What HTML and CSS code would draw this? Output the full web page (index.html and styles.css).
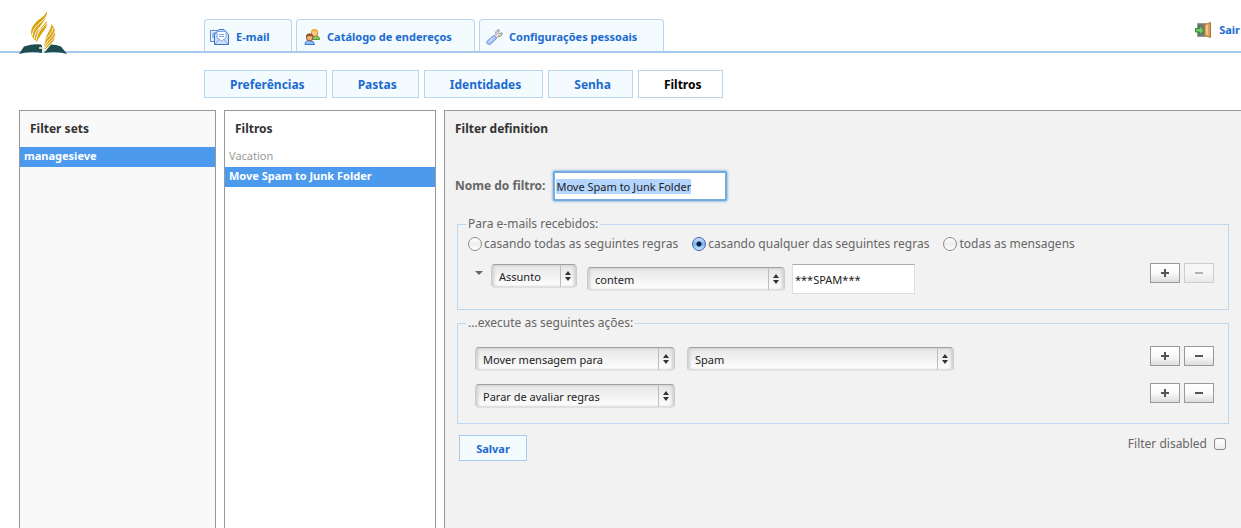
FILE: index.html
```html
<!DOCTYPE html>
<html lang="pt-BR">
<head>
  <meta charset="UTF-8">
  <meta name="viewport" content="width=device-width, initial-scale=1.0">
  <title>Filtros</title>
  <link rel="stylesheet" href="styles.css">
</head>
<body>
<header class="header">
  <svg class="logo" width="48" height="45" viewBox="0 0 48 45">
    <path fill="#1f4d4d" d="M0 43L5 35.500Q14 32.500 22 33.500L23.500 36V42Q12 39.500 0 43z"/>
    <path fill="#1f4d4d" d="M48 43L42 35.500Q37 33.500 32 33.500L25 42Q37 39.500 48 43z"/>
    <path fill="#d9a411" d="M28 0C29 11 17 13 18 31 10 25 10 18 18 10 23 6 26 5 28 0z"/>
    <path fill="#d9a411" d="M28 10C29 18 22 21 18 31 17 20 22 17 28 10z"/>
    <path fill="none" stroke="#fff" stroke-width=".9" d="M28 4C25 11 14 14 13 25M28 8C25 14 16 17 15 28M28 12C25 16 18 19 17 30"/>
    <path fill="#d9a411" d="M32 13C33 20 24 23 24.500 43 25 36 35 33 36 26 37 20 35 16 32 13z"/>
    <path fill="none" stroke="#fff" stroke-width=".9" d="M34 17C33 24 26 26 25 33M36 20C34 27 27 29 25 37M36 25C34 30 27 32 25 40"/>
    <path fill="none" stroke="#fff" stroke-width="1.500" d="M24 34v11M20 37h3"/>
  </svg>
  <nav class="taskbar">
    <a href="#" class="task mail">
      <svg width="20" height="16" viewBox="0 0 20 16">
        <path fill="#e8f1ff" stroke="#5b87d6" d="M.5 1.500h14v11H.5z"/>
        <path fill="none" stroke="#5b87d6" d="M3 4v5M3 4h3"/>
        <path fill="#cfe2fb" stroke="#3d6fc4" d="M4.500 5.500L9 .5h5l4.500 5v10h-14z"/>
        <path fill="#fff" stroke="#7ba4e2" d="M7 9V2.500h9V9l-4.500 3z"/>
        <path fill="none" stroke="#7ba4e2" d="M9 5.500h5M9 7.500h5M5 15l4.500-5M18 15l-4.500-5"/>
      </svg>
      E-mail
    </a>
    <a href="#" class="task contacts">
      <svg width="17" height="16" viewBox="0 0 17 16">
        <path fill="#86c95a" stroke="#58993a" d="M6.500 10.500q0-4 4.500-4t4.500 4z"/>
        <circle cx="10.500" cy="4" r="3.300" fill="#f9c992" stroke="#cf8627"/>
        <path fill="#f0b321" d="M7 4q-.5-4 3.500-4T14 4q-1-2-3.500-2T7 4z"/>
        <path fill="#8ec0f8" stroke="#3977cf" d="M1 15.500q0-4 4.500-4t5 4z"/>
        <circle cx="5.700" cy="8.500" r="3.300" fill="#efb185" stroke="#935024"/>
        <path fill="#95532b" d="M2 8.500q-.5-4 3.500-4t4 4Q8.500 7 5.700 7T2 8.500z"/>
      </svg>
      Catálogo de endereços
    </a>
    <a href="#" class="task settings">
      <svg width="17" height="16" viewBox="0 0 17 16">
        <path fill="#dedede" stroke="#8a8a8a" d="M8 7.500l2-2Q9 2 12.500.6l.9.600-1 2.300 1.300 1.300 2.200-1 .6.800Q15.500 8 12 7.500L10 9.500z"/>
        <path fill="#a9c6f5" stroke="#6f94d4" d="M7.500 6.500l3 3-5 5Q4 16 2 15.200.2 14.500.8 12.500z"/>
        <path fill="none" stroke="#d8e7ff" d="M7.500 8.500l-5 5"/>
      </svg>
      Configurações pessoais
    </a>
  </nav>
  <a href="#" class="logout">
    <svg width="17" height="16" viewBox="0 0 17 16">
      <path fill="#777" stroke="#999" d="M2.500 1.500h8v13h-8z"/>
      <path fill="#d9a35b" stroke="#a9753a" d="M9.500 2.500l6-2v15l-6-2z"/>
      <path fill="#edc68d" d="M11 3.500l2-1v11l-2-1z"/>
      <path fill="#77c46a" stroke="#2f8a35" d="M.5 6.500h4v-3l4.500 5-4.500 4.500v-3h-4z"/>
    </svg>
    Sair
  </a>
</header>

<nav class="sections">
  <a href="#" class="section">Preferências</a>
  <a href="#" class="section">Pastas</a>
  <a href="#" class="section">Identidades</a>
  <a href="#" class="section">Senha</a>
  <a href="#" class="section active">Filtros</a>
</nav>

<main class="panels">
  <section class="panel filter-sets">
    <h2>Filter sets</h2>
    <ul class="list">
      <li class="selected">managesieve</li>
    </ul>
  </section>

  <section class="panel filters">
    <h2>Filtros</h2>
    <ul class="list">
      <li class="disabled">Vacation</li>
      <li class="selected">Move Spam to Junk Folder</li>
    </ul>
  </section>

  <section class="panel definition">
    <h2>Filter definition</h2>
    <form class="filter-form">
      <div class="name-row">
        <label for="filterName">Nome do filtro:</label>
        <input type="text" id="filterName" class="name-input" value="Move Spam to Junk Folder">
      </div>

      <fieldset>
        <legend>Para e-mails recebidos:</legend>
        <div class="radios">
          <label><input type="radio" name="join">casando todas as seguintes regras</label>
          <label><input type="radio" name="join" checked>casando qualquer das seguintes regras</label>
          <label><input type="radio" name="join">todas as mensagens</label>
        </div>
        <div class="row rule">
          <span class="caret"></span>
          <span class="select subject">
            <select aria-label="Assunto"><option>Assunto</option></select>
            <svg class="arrows" width="6" height="10" viewBox="0 0 6 10"><path d="M3 0l3 4H0zM3 10l3-4H0z"/></svg>
          </span>
          <span class="select operator">
            <select aria-label="contem"><option>contem</option></select>
            <svg class="arrows" width="6" height="10" viewBox="0 0 6 10"><path d="M3 0l3 4H0zM3 10l3-4H0z"/></svg>
          </span>
          <input type="text" class="value-input" aria-label="Valor" value="***SPAM***">
          <span class="buttons">
            <button type="button" class="small-btn plus" aria-label="+"></button>
            <button type="button" class="small-btn" aria-label="-" disabled></button>
          </span>
        </div>
      </fieldset>

      <fieldset class="actions">
        <legend>...execute as seguintes ações:</legend>
        <div class="row">
          <span class="select action">
            <select aria-label="Mover mensagem para"><option>Mover mensagem para</option></select>
            <svg class="arrows" width="6" height="10" viewBox="0 0 6 10"><path d="M3 0l3 4H0zM3 10l3-4H0z"/></svg>
          </span>
          <span class="select folder">
            <select aria-label="Spam"><option>Spam</option></select>
            <svg class="arrows" width="6" height="10" viewBox="0 0 6 10"><path d="M3 0l3 4H0zM3 10l3-4H0z"/></svg>
          </span>
          <span class="buttons">
            <button type="button" class="small-btn plus" aria-label="+"></button>
            <button type="button" class="small-btn" aria-label="-"></button>
          </span>
        </div>
        <div class="row">
          <span class="select action">
            <select aria-label="Parar de avaliar regras"><option>Parar de avaliar regras</option></select>
            <svg class="arrows" width="6" height="10" viewBox="0 0 6 10"><path d="M3 0l3 4H0zM3 10l3-4H0z"/></svg>
          </span>
          <span class="buttons">
            <button type="button" class="small-btn plus" aria-label="+"></button>
            <button type="button" class="small-btn" aria-label="-"></button>
          </span>
        </div>
      </fieldset>

      <div class="form-footer">
        <button type="submit" class="save-btn">Salvar</button>
        <label class="disable">Filter disabled <input type="checkbox"></label>
      </div>
    </form>
  </section>
</main>

<script>
  const filterName = document.getElementById("filterName");
  filterName.focus();
  filterName.select();
</script>
</body>
</html>
```
FILE: styles.css
```css
* {
  box-sizing: border-box;
}
body {
  margin: 0;
  min-height: 100vh;
  display: flex;
  flex-direction: column;
  background: #fff;
  color: #666;
  font-family: "Noto Sans", "Open Sans", sans-serif;
  font-size: 12px;
  line-height: 16px;
}
a {
  color: #1b6ad1;
  font-weight: bold;
  text-decoration: none;
}
input, select, button {
  font-family: inherit;
  font-size: 11px;
  color: #222;
}

/* header */
.header {
  display: flex;
  align-items: flex-end;
  height: 53px;
  padding-left: 19px;
  border-bottom: 2px solid #a6caec;
}
.logo {
  margin-bottom: -5px;
}
.taskbar {
  display: flex;
  gap: 4px;
  margin-left: 137px;
}
.task {
  display: flex;
  align-items: center;
  gap: 6px;
  height: 32px;
  padding: 3px 18px 0 5px;
  border: 1px solid #b7d5ef;
  border-bottom: none;
  border-radius: 4px 4px 0 0;
  background: #f4fbff;
  font-size: 11px;
}
.mail {
  min-width: 88px;
}
.contacts {
  min-width: 179px;
  padding-left: 7px;
}
.settings {
  min-width: 185px;
  padding-left: 6px;
}
.logout {
  display: flex;
  align-items: center;
  gap: 7px;
  margin-left: auto;
  padding: 0 1px 13px 0;
  font-size: 11px;
}

/* section tabs */
.sections {
  display: flex;
  gap: 5px;
  padding: 17px 0 12px 204px;
}
.section {
  height: 28px;
  padding: 0 21px 0 25px;
  border: 1px solid #b7d5ef;
  background: #f4fbff;
  line-height: 27px;
}
.section.active {
  background: #fff;
  color: #000;
}

/* panels */
.panels {
  flex: 1;
  display: flex;
  gap: 8px;
  padding-left: 19px;
}
.panel {
  border: 1px solid #999;
  border-bottom: none;
  background: #fff;
}
.panel h2 {
  margin: 0;
  padding: 10px;
  color: #333;
  font-size: 12px;
  line-height: 16px;
}
.filter-sets {
  width: 197px;
  background: #f9f9f9;
}
.filters {
  width: 212px;
}
.definition {
  flex: 1;
  border-right: none;
  background: #f2f2f2;
}
.list {
  margin: 0;
  padding: 0;
  list-style: none;
  font-size: 11px;
}
.list li {
  height: 20px;
  padding: 0 4px;
  line-height: 18px;
}
.list .selected {
  background: #4c9aed;
  color: #fff;
  font-weight: bold;
}
.list .disabled {
  color: #999;
}

/* filter form */
.filter-form {
  padding: 24px 12px 0;
}
.name-row {
  display: flex;
  align-items: center;
  gap: 8px;
  margin: 0 -2px 15px;
}
.name-row label {
  font-weight: bold;
}
.name-input {
  width: 174px;
  height: 30px;
  padding: 0 1px;
  border: 2px solid #77abdd;
  border-radius: 2px;
  outline: none;
  background: #fff;
  box-shadow: 0 0 2px 1px #9cc3ea;
}
.name-input::selection {
  background: #b4d5fe;
  color: #222;
}
fieldset {
  margin: 0;
  padding: 0 14px 15px 8px;
  border: 1px solid #bbd8f0;
}
fieldset + fieldset {
  margin-top: 5px;
}
legend {
  padding: 0 2px;
}
.radios {
  display: flex;
  flex-wrap: wrap;
  gap: 14px;
  padding: 4px 2px 0;
}
.radios label {
  display: flex;
  align-items: center;
  gap: 2px;
}
.radios input {
  appearance: none;
  width: 14px;
  height: 14px;
  margin: 0;
  border: 1px solid #8b8b8b;
  border-radius: 50%;
  background: linear-gradient(#fff, #eee 50%, #fff);
}
.radios input:checked {
  border-color: #44669c;
  background: radial-gradient(circle, #0b1d40 2px, transparent 3px), linear-gradient(#cfe3fa, #79b3f0 50%, #c4ecff);
}
.row {
  display: flex;
  align-items: flex-start;
  gap: 12px;
}
.rule {
  gap: 7px;
  padding: 12px 0 0 9px;
}
.caret {
  margin: 7px 1px 0 0;
  border: 4px solid transparent;
  border-top-color: #666;
  border-bottom: none;
}
.select {
  position: relative;
  height: 24px;
}
.select select {
  appearance: none;
  width: 100%;
  height: 24px;
  padding: 0 24px 0 7px;
  border: 1px solid #ccc;
  border-top-color: #a0a0a0;
  border-bottom-color: #dde1e6;
  border-radius: 4px;
  background: linear-gradient(#bbb, #bbb) right 15px top / 1px 100% no-repeat, linear-gradient(#e6e6e6, #fff);
  box-shadow: inset 2px 0 3px #d0d0d0, inset -2px 0 3px #d0d0d0;
}
.arrows {
  position: absolute;
  top: 7px;
  right: 6px;
  fill: #333;
  pointer-events: none;
}
.subject {
  width: 86px;
}
.operator {
  width: 198px;
  margin: 3px 0 0 3px;
}
.action {
  width: 200px;
}
.folder {
  width: 267px;
}
.value-input {
  width: 123px;
  height: 30px;
  padding: 0 2px;
  border: 1px solid #ddd;
  border-top-color: #aaa;
  background: #fff;
}
.buttons {
  display: flex;
  gap: 4px;
  margin: -1px 0 0 auto;
}
.small-btn {
  width: 30px;
  height: 20px;
  padding: 0;
  border: 1px solid #999;
  background: linear-gradient(#555, #555) center / 8px 2px no-repeat, linear-gradient(#fff, #fafafa 50%, #ddd);
}
.small-btn.plus {
  background: linear-gradient(#555, #555) center / 8px 2px no-repeat, linear-gradient(#555, #555) center / 2px 8px no-repeat, linear-gradient(#fff, #fafafa 50%, #ddd);
}
.small-btn:disabled {
  opacity: 0.4;
}
.actions .row {
  padding: 0 0 13px 9px;
}
.actions legend + .row {
  padding-top: 16px;
}
.actions {
  padding-bottom: 2px;
}

.form-footer {
  display: flex;
  justify-content: space-between;
  align-items: flex-start;
  padding: 11px 3px 0 2px;
}
.save-btn {
  width: 68px;
  height: 26px;
  border: 1px solid #a4cbf0;
  background: #f4fbff;
  color: #1b6ad1;
  font-weight: bold;
}
.disable {
  display: flex;
  align-items: center;
  gap: 7px;
  padding-top: 1px;
}
.disable input {
  appearance: none;
  width: 12px;
  height: 12px;
  margin: 0;
  border: 1px solid #888;
  border-radius: 3px;
  background: linear-gradient(#fff, #f0f0f0);
}
```
